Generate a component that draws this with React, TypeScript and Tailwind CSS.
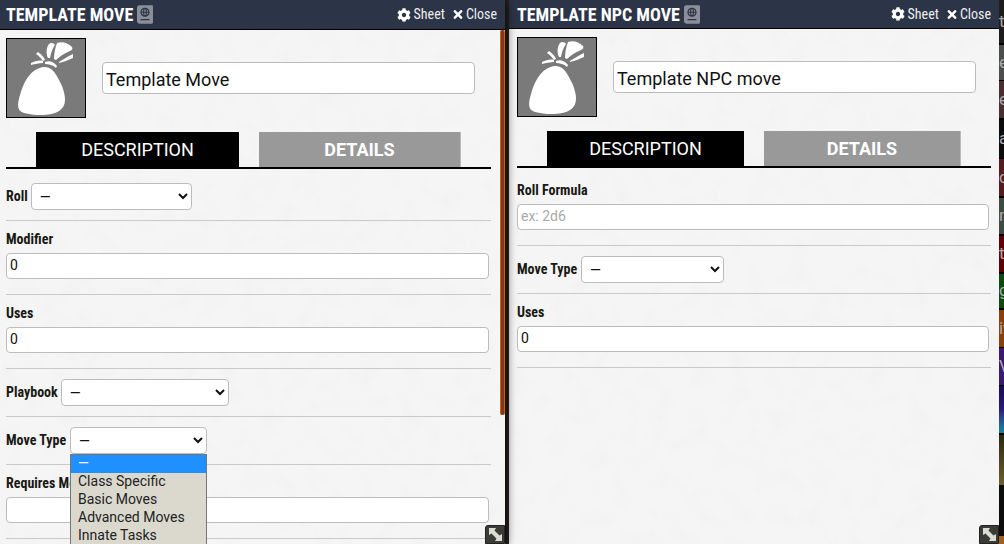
import React from "react";
import { FaCog, FaTimes, FaPassport } from "react-icons/fa";

const Cond = "[font-stretch:75%]";

function Bag() {
  return (
    <div className="w-[80px] h-[80px] shrink-0 bg-[#7a7a7a] border border-black">
      <svg viewBox="0 0 78 78" className="w-full h-full block" fill="#fff">
        <path d="M37 28 C25 29 17 41 13 56 C10 66 10 72 17 74 C28 77 45 77 52 72 C60 67 59 58 55 47 C50 36 45 27 37 28Z" />
        <path d="M24 24 C28 22 33 21 36 22 L36 24 C32 24 28 25 24 26Z" />
        <path d="M38 23 C42 21 47 23 50 27 L49 29 C46 26 42 25 38 25Z" />
        <path d="M29 15 L31 13 C34 15 37 18 38 21 L36 22 C34 19 32 17 29 15Z" />
        <path d="M42 5 C44 3 47 4 48 6 C45 10 44 14 43 19 L41 19 C39 15 39 9 42 5Z" />
        <path d="M50 4 C55 2 61 4 65 8 C66 10 65 11 63 12 C58 14 53 17 49 21 L47 20 C47 15 48 9 50 4Z" />
        <path d="M52 23 C57 20 61 17 66 15 L66 19 C61 21 57 23 52 24Z" />
      </svg>
    </div>
  );
}

function Texture({ id }: { id: string }) {
  return (
    <svg className="absolute inset-0 w-full h-full pointer-events-none" aria-hidden="true">
      <filter id={id}>
        <feTurbulence type="fractalNoise" baseFrequency="0.05" numOctaves="4" seed="3" />
        <feColorMatrix values="0 0 0 0 0.5  0 0 0 0 0.5  0 0 0 0 0.5  0 0 0 1.1 -0.52" />
      </filter>
      <rect width="100%" height="100%" filter={`url(#${id})`} opacity="0.1" />
    </svg>
  );
}

function Header({ title, h, pl }: { title: string; h: string; pl: string }) {
  return (
    <div className={`${h} ${pl} shrink-0 bg-[#2c3447] border-b border-black flex items-center pr-[8px] text-white`}>
      <span className={`font-bold text-[18px] ${Cond}`}>{title}</span>
      <FaPassport className="ml-[4px] w-[16px] h-[19px] text-[#8a8e98]" />
      <span className="ml-auto flex items-center text-[14px] text-[#eeeeee]">
        <FaCog className="w-[14px] h-[14px] text-white" />
        <span className={`ml-[3px] ${Cond}`}>Sheet</span>
        <FaTimes className="ml-[8px] w-[10px] h-[13px] text-white" />
        <span className={`ml-[3px] ${Cond}`}>Close</span>
      </span>
    </div>
  );
}

function Tabs({ a, b, gap }: { a: string; b: string; gap: string }) {
  return (
    <div className="mt-[14px] h-[37px] flex items-start border-b-2 border-black">
      <div className={`${a} h-[37px] pb-[2px] bg-black text-white text-[18px] flex items-center justify-center`}>DESCRIPTION</div>
      <div className={`${b} ${gap} h-[35px] bg-[#999999] text-white text-[18px] font-bold border-r border-[#bbb] flex items-center justify-center`}>DETAILS</div>
    </div>
  );
}

function Label({ children, cls = "" }: { children: React.ReactNode; cls?: string }) {
  return <span className={`font-bold text-[14px] leading-[20px] text-[#191813] ${Cond} ${cls}`}>{children}</span>;
}

function Sel({ w }: { w: string }) {
  return (
    <select defaultValue="" className={`${w} h-[27px] bg-white border border-[#bcbcbc] rounded-[4px] text-[14px] text-[#111] pl-[4px] outline-none`}>
      <option value="">—</option>
    </select>
  );
}

function TextRow({ label, value, ph, w, pt }: { label: string; value?: string; ph?: string; w: string; pt: string }) {
  return (
    <div className={`${pt} pb-[15px] border-b border-[#c9c9c9] flex flex-col`}>
      <Label>{label}</Label>
      <input
        readOnly
        value={value ?? ""}
        placeholder={ph}
        className={`${w} mt-[4px] h-[26px] pb-[2px] bg-white border border-[#bcbcbc] rounded-[4px] px-[3px] text-[14px] text-[#111] placeholder:text-[#aaa] outline-none`}
      />
    </div>
  );
}

function SelRow({ label, w, pt, gap, children }: { label: string; w: string; pt: string; gap: string; children?: React.ReactNode }) {
  return (
    <div className={`${pt} ${gap} pb-[10px] border-b border-[#c9c9c9] flex items-center relative`}>
      <Label cls="pb-[2px]">{label}</Label>
      <Sel w={w} />
      {children}
    </div>
  );
}

function Resizer() {
  return (
    <div className="absolute right-0 bottom-0 w-[20px] h-[19px] bg-[#3b3b38] rounded-tl-[3px] border border-[#222] flex items-center justify-center">
      <svg width="15" height="15" viewBox="0 0 15 15" fill="#dcdcd2">
        <path d="M1 1 H8 L6.5 3.5 L11.5 8.5 L14 7 V14 H7 L8.5 11.5 L3.5 6.5 L1 8Z" />
      </svg>
    </div>
  );
}

function Menu() {
  return (
    <div className="absolute left-[64px] top-[37px] w-[137px] bg-[#dbd9ce] border border-[#767676] text-[14px] leading-[16px] text-[#222] z-20">
      <div className="h-[18px] bg-[#1e90ff] text-white pl-[7px]">—</div>
      <div className="h-[18px] pl-[7px]">Class Specific</div>
      <div className="h-[18px] pl-[7px]">Basic Moves</div>
      <div className="h-[18px] pl-[7px]">Advanced Moves</div>
      <div className="h-[30px] pl-[7px]">Innate Tasks</div>
    </div>
  );
}

function NameInput({ value, w }: { value: string; w: string }) {
  return (
    <input
      readOnly
      value={value}
      className={`${w} h-[32px] pt-[2px] bg-white border border-[#bcbcbc] rounded-[4px] px-[3px] text-[18px] text-[#111] outline-none`}
    />
  );
}

const strip = [
  { h: "h-[43px]", c: "bg-[#1c1c1c]", t: "t", m: "mb-[2px]" },
  { h: "h-[35px]", c: "bg-[#4a4e4c]", t: "e", m: "mb-[1px]" },
  { h: "h-[37px]", c: "bg-[#4a2f30]", t: "e", m: "mb-[2px]" },
  { h: "h-[38px]", c: "bg-[#0c0c0c]", t: "a", m: "mb-[1px]" },
  { h: "h-[37px]", c: "bg-[#551c1e]", t: "c", m: "mb-[2px]" },
  { h: "h-[36px]", c: "bg-[#3e4a42]", t: "n", m: "mb-[2px]" },
  { h: "h-[36px]", c: "bg-[#5e0006]", t: "t", m: "mb-[2px]" },
  { h: "h-[34px]", c: "bg-[#0e4a10]", t: "g", m: "mb-[2px]" },
  { h: "h-[37px]", c: "bg-[#8a4008]", t: "it", m: "mb-[1px]" },
  { h: "h-[37px]", c: "bg-[#3a1a70]", t: "Vi", m: "mb-[1px]" },
  { h: "h-[47px]", c: "bg-gradient-to-b from-[#1a0a50] via-[#2a1a80] to-[#0a88a0]", t: "", m: "mb-[2px]" },
  { h: "h-[50px]", c: "bg-gradient-to-b from-[#2a2810] via-[#4a4420] to-[#6a6030]", t: "", m: "" },
  { h: "h-[51px]", c: "bg-[#0c0c0c]", t: "", m: "" },
  { h: "h-[8px]", c: "bg-[#a06020]", t: "", m: "" },
];

export default function App() {
  return (
    <div className="relative flex h-[544px] w-[1004px] overflow-hidden bg-[#26241f] text-[#191813] font-['Roboto',sans-serif]">
      <div className="relative z-10 w-[505px] shrink-0 flex flex-col bg-[#f5f5f5] shadow-[0_0_10px_#000]">
        <Header title="TEMPLATE MOVE" h="h-[30px]" pl="pl-[6px]" />
        <div className="relative flex-1 overflow-hidden">
          <Texture id="tex-a" />
          <div className="relative pl-[6px] pr-[14px]">
            <div className="mt-[8px] flex items-center gap-[16px]">
              <Bag />
              <NameInput value="Template Move" w="w-[373px]" />
            </div>
            <Tabs a="ml-[30px] w-[203px]" b="w-[202px]" gap="ml-[20px]" />
            <SelRow label="Roll" w="w-[161px]" pt="pt-[14px]" gap="gap-[3px]" />
            <TextRow label="Modifier" value="0" w="w-[483px]" pt="pt-[8px]" />
            <TextRow label="Uses" value="0" w="w-[483px]" pt="pt-[8px]" />
            <SelRow label="Playbook" w="w-[168px]" pt="pt-[10px]" gap="gap-[3px]" />
            <SelRow label="Move Type" w="w-[137px]" pt="pt-[10px]" gap="gap-[4px]">
              <Menu />
            </SelRow>
            <TextRow label="Requires Move" w="w-[483px]" pt="pt-[8px]" />
          </div>
        </div>
        <div className="absolute right-0 top-[30px] w-[5px] h-[385px] bg-[#7a3a20] border-x border-[#e05a00] rounded-[2px]" />
        <Resizer />
      </div>
      <div className="ml-[4px] relative w-[490px] shrink-0 flex flex-col bg-[#f5f5f5]">
        <Header title="TEMPLATE NPC MOVE" h="h-[29px]" pl="pl-[8px]" />
        <div className="relative flex-1 overflow-hidden">
          <Texture id="tex-b" />
          <div className="relative px-[8px]">
            <div className="mt-[8px] flex items-center gap-[16px]">
              <Bag />
              <NameInput value="Template NPC move" w="w-[363px]" />
            </div>
            <Tabs a="ml-[30px] w-[197px]" b="w-[197px]" gap="ml-[20px]" />
            <TextRow label="Roll Formula" ph="ex: 2d6" w="w-[472px]" pt="pt-[12px]" />
            <SelRow label="Move Type" w="w-[143px]" pt="pt-[10px]" gap="gap-[4px]" />
            <TextRow label="Uses" value="0" w="w-[472px]" pt="pt-[8px]" />
          </div>
        </div>
        <Resizer />
      </div>
      <div className="flex-1 flex flex-col overflow-hidden bg-black">
        {strip.map((s, i) => (
          <div key={i} className={`${s.h} ${s.c} ${s.m} shrink-0 flex items-center text-[17px] text-[#a8a8a8]`}>
            {s.t}
          </div>
        ))}
      </div>
    </div>
  );
}
